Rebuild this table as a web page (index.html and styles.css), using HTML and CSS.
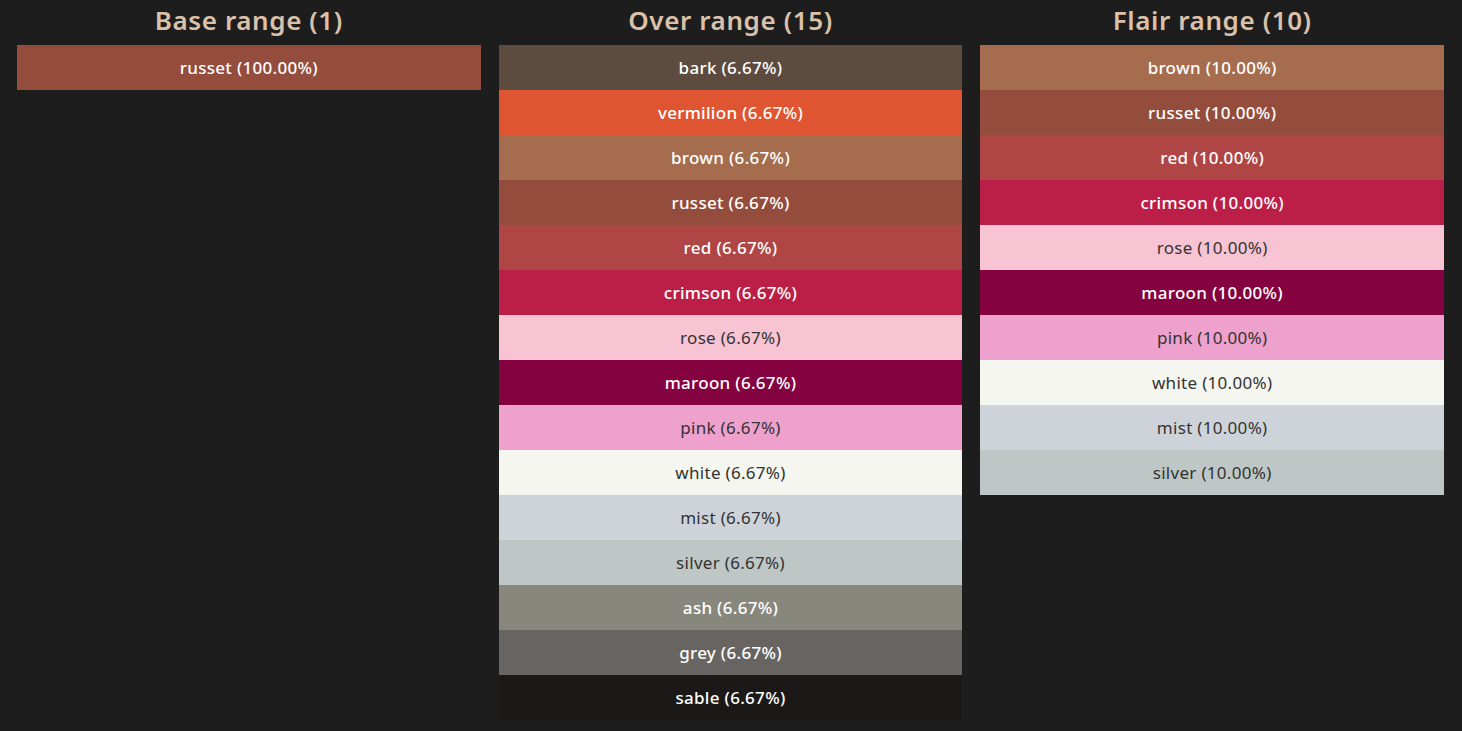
FILE: index.html
```html
<!DOCTYPE html>
<html lang="en">
<head>
<meta charset="utf-8">
<title>Ranges</title>
<link rel="stylesheet" href="styles.css">
</head>
<body>
<main class="ranges">
  <section class="range">
    <h2 class="range-title">Base range (1)</h2>
    <ul class="swatches">
      <li class="swatch c-russet">russet (100.00%)</li>
    </ul>
  </section>
  <section class="range">
    <h2 class="range-title">Over range (15)</h2>
    <ul class="swatches">
      <li class="swatch c-bark">bark (6.67%)</li>
      <li class="swatch c-vermilion">vermilion (6.67%)</li>
      <li class="swatch c-brown">brown (6.67%)</li>
      <li class="swatch c-russet">russet (6.67%)</li>
      <li class="swatch c-red">red (6.67%)</li>
      <li class="swatch c-crimson">crimson (6.67%)</li>
      <li class="swatch c-rose light">rose (6.67%)</li>
      <li class="swatch c-maroon">maroon (6.67%)</li>
      <li class="swatch c-pink light">pink (6.67%)</li>
      <li class="swatch c-white light">white (6.67%)</li>
      <li class="swatch c-mist light">mist (6.67%)</li>
      <li class="swatch c-silver light">silver (6.67%)</li>
      <li class="swatch c-ash">ash (6.67%)</li>
      <li class="swatch c-grey">grey (6.67%)</li>
      <li class="swatch c-sable">sable (6.67%)</li>
    </ul>
  </section>
  <section class="range">
    <h2 class="range-title">Flair range (10)</h2>
    <ul class="swatches">
      <li class="swatch c-brown">brown (10.00%)</li>
      <li class="swatch c-russet">russet (10.00%)</li>
      <li class="swatch c-red">red (10.00%)</li>
      <li class="swatch c-crimson">crimson (10.00%)</li>
      <li class="swatch c-rose light">rose (10.00%)</li>
      <li class="swatch c-maroon">maroon (10.00%)</li>
      <li class="swatch c-pink light">pink (10.00%)</li>
      <li class="swatch c-white light">white (10.00%)</li>
      <li class="swatch c-mist light">mist (10.00%)</li>
      <li class="swatch c-silver light">silver (10.00%)</li>
    </ul>
  </section>
</main>
</body>
</html>
```

FILE: styles.css
```css
html, body {
  margin: 0;
  padding: 0;
  background: #1d1d1d;
  height: 100%;
}
body {
  font-family: "Noto Sans", "Open Sans", sans-serif;
}
.ranges {
  display: grid;
  grid-template-columns: repeat(3, 1fr);
  gap: 18px;
  padding: 0 18px 0 17px;
}
.range {
  display: flex;
  flex-direction: column;
}
.range-title {
  margin: 0;
  height: 45px;
  display: flex;
  align-items: center;
  justify-content: center;
  font-size: 26px;
  font-weight: 600;
  color: #dbc1aa;
  letter-spacing: 0.6px;
  padding-bottom: 5px;
  box-sizing: border-box;
}
.swatches {
  list-style: none;
  margin: 0;
  padding: 0;
}
.swatch {
  height: 45px;
  display: flex;
  align-items: center;
  justify-content: center;
  font-size: 17px;
  font-weight: 500;
  letter-spacing: 0.3px;
  color: #ffffff;
}
.swatch.light {
  color: #333333;
  font-weight: 400;
}
.c-bark { background: #5c4b3e; }
.c-vermilion { background: #df5532; }
.c-brown { background: #a56c4d; }
.c-russet { background: #944c3c; }
.c-red { background: #b04545; }
.c-crimson { background: #bb1f47; }
.c-rose { background: #f8c3d2; }
.c-maroon { background: #850240; }
.c-pink { background: #eea1cd; }
.c-white { background: #f5f6f0; }
.c-mist { background: #ced3da; }
.c-silver { background: #bec7c5; }
.c-ash { background: #88877d; }
.c-grey { background: #686461; }
.c-sable { background: #1b1917; }
```
